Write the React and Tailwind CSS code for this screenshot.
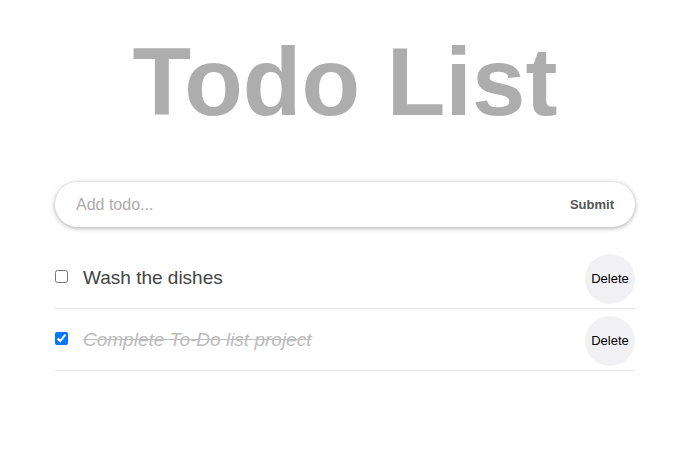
import { useState } from 'react';

export default function App() {
    const [todos, setTodos] = useState([
        { id: 1, text: 'Wash the dishes', done: false },
        { id: 2, text: 'Complete To-Do list project', done: true },
    ]);
    const [text, setText] = useState('');

    const toggle = (id) =>
        setTodos(todos.map((t) => (t.id === id ? { ...t, done: !t.done } : t)));
    const remove = (id) => setTodos(todos.filter((t) => t.id !== id));

    return (
        <div className="min-h-[465px] bg-white font-['Liberation_Sans',Arial,sans-serif]">
            <div className="w-[580px] ml-[55px] pt-[28px]">
                <h1 className="text-center text-[96px] font-bold leading-[107px] text-[#adadad]">Todo List</h1>

                <form
                    className="mt-[47px] flex items-center h-[45px] rounded-full bg-white shadow-[0_1px_5px_rgba(0,0,0,0.35)] pl-[21px] pr-[21px]"
                    onSubmit={(e) => {
                        e.preventDefault();
                        if (!text.trim()) return;
                        setTodos([...todos, { id: Date.now(), text, done: false }]);
                        setText('');
                    }}
                >
                    <input
                        value={text}
                        onChange={(e) => setText(e.target.value)}
                        placeholder="Add todo..."
                        className="flex-1 text-[16px] text-[#444] placeholder-[#b0aaaa] outline-none bg-transparent"
                    />
                    <button type="submit" className="text-[13px] font-bold text-[#555]">Submit</button>
                </form>

                <ul className="mt-[20px]">
                    {todos.map((t) => (
                        <li
                            key={t.id}
                            className="flex items-center pt-[7px] pb-[4px] border-b border-[#e6e6e6]"
                        >
                            <input
                                type="checkbox"
                                checked={t.done}
                                onChange={() => toggle(t.id)}
                                className="m-0 mb-[6px] w-[13px] h-[13px] accent-[#0075ff]"
                            />
                            <span
                                className={
                                    t.done
                                        ? 'ml-[15px] mb-[1px] flex-1 text-[19px] italic line-through text-[#bcbcbc]'
                                        : 'ml-[15px] mb-[1px] flex-1 text-[19px] text-[#444]'
                                }
                            >
                                {t.text}
                            </span>
                            <button
                                onClick={() => remove(t.id)}
                                className="w-[50px] h-[50px] rounded-full bg-[#f1f1f3] text-[13px] text-black"
                            >
                                Delete
                            </button>
                        </li>
                    ))}
                </ul>
            </div>
        </div>
    );
}
